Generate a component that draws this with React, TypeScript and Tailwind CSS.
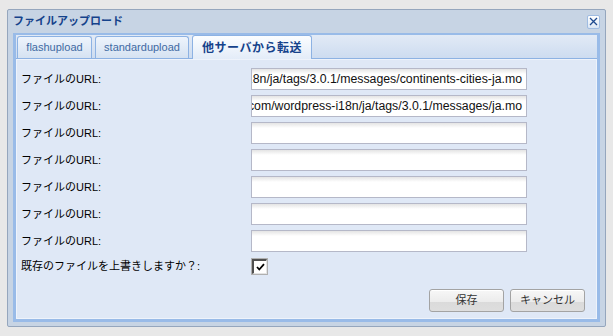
import React from "react";

const FONT = "font-['Liberation_Sans','Noto_Sans_CJK_JP',sans-serif]";

const urls = [
  "http://svn.automattic.com/wordpress-i18n/ja/tags/3.0.1/messages/continents-cities-ja.mo",
  "http://svn.automattic.com/wordpress-i18n/ja/tags/3.0.1/messages/ja.mo",
  "",
  "",
  "",
  "",
  "",
];

function UrlRow({ value }: { value: string }) {
  return (
    <div className="flex items-center h-[22px]">
      <div className="w-[230px] text-[11px] text-black leading-none">ファイルのURL:</div>
      <div className="w-[276px] h-[22px] border border-[#b5b8c8] bg-[linear-gradient(to_bottom,#e4e4e4,#ffffff_5px)] flex items-center justify-end overflow-hidden pr-[4px]">
        <span className="whitespace-nowrap text-[12.3px] text-[#111] shrink-0 leading-none">{value}</span>
      </div>
    </div>
  );
}

function Button({ label }: { label: string }) {
  return (
    <div className="w-[75px] h-[23px] rounded-[3px] border border-[#a3a3a3] bg-[linear-gradient(to_bottom,#f7f7f7_0%,#ececec_55%,#dadada_56%,#dedede_100%)] flex items-center justify-center text-[11px] text-[#333] shadow-[inset_0_1px_0_#fff]">
      {label}
    </div>
  );
}

export default function App() {
  return (
    <div className={`w-[613px] h-[336px] bg-[#e8e8e8] pt-[9px] pl-[7px] ${FONT}`}>
      <div className="w-[599px] h-[318px] border border-[#95a6bd] rounded-[2px] bg-[#c7d4e4] flex flex-col">
        {/* header */}
        <div className="h-[23px] flex items-center justify-between pl-[5px] pr-[5px]">
          <span className="text-[11px] font-bold text-[#15428b] leading-none">ファイルアップロード</span>
          <div className="w-[13px] h-[14px] rounded-[2px] border border-[#9fbce2] bg-[linear-gradient(to_bottom,#ffffff,#dbe6f4)] flex items-center justify-center">
            <svg width="9" height="9" viewBox="0 0 9 9">
              <path d="M1 1 L8 8 M8 1 L1 8" stroke="#1f4a8f" strokeWidth="1.3" />
            </svg>
          </div>
        </div>
        {/* panel */}
        <div className="mx-[5px] h-[289px] border-t-2 border-x-[3px] border-b-[3px] border-[#99bbe8] flex flex-col">
          {/* tab strip */}
          <div className="h-[24px] flex items-end gap-[3px] pl-[1px] border-b border-[#8db2e3] bg-[linear-gradient(to_bottom,#e2eaf6,#cddcf0)]">
            <div className="w-[75px] h-[22px] rounded-t-[3px] border border-b-0 border-[#8db2e3] bg-[linear-gradient(to_bottom,#eef4fc,#d5e2f2)] flex items-center justify-center text-[11px] text-[#416aa3]">
              flashupload
            </div>
            <div className="w-[94px] h-[22px] rounded-t-[3px] border border-b-0 border-[#8db2e3] bg-[linear-gradient(to_bottom,#eef4fc,#d5e2f2)] flex items-center justify-center text-[11px] text-[#416aa3]">
              standardupload
            </div>
            <div className="relative -mb-[1px] w-[120px] h-[24px] rounded-t-[3px] border border-b-0 border-[#8db2e3] bg-[linear-gradient(to_bottom,#fbfdff,#e3ecf8)] flex items-center justify-center text-[12px] font-bold text-[#15428b] tracking-[0.5px]">
              他サーバから転送
            </div>
          </div>
          {/* body */}
          <div className="flex-1 bg-[#dfe8f6] border border-[#eef3fb] pt-[8px] pl-[4px] pr-[11px] flex flex-col">
            <div className="flex flex-col gap-[5px]">
              {urls.map((u, i) => (
                <UrlRow key={i} value={u} />
              ))}
              <div className="flex items-center h-[18px]">
                <div className="w-[230px] text-[11px] text-black leading-none">既存のファイルを上書きしますか？:</div>
                <div className="w-[17px] h-[17px] border border-[#b0b0b0] bg-[#eeeeee] flex">
                  <div className="w-[15px] h-[15px] border-t-2 border-l-2 border-r border-b border-t-[#505050] border-l-[#505050] border-r-[#e4e4e4] border-b-[#e4e4e4] bg-white flex items-center justify-center">
                    <svg width="9" height="8" viewBox="0 0 9 8">
                      <path d="M1 4 L3.3 6.5 L8 1.2" stroke="#000" strokeWidth="1.8" fill="none" />
                    </svg>
                  </div>
                </div>
              </div>
            </div>
            <div className="mt-[14px] flex justify-end gap-[6px]">
              <Button label="保存" />
              <Button label="キャンセル" />
            </div>
          </div>
        </div>
      </div>
    </div>
  );
}
